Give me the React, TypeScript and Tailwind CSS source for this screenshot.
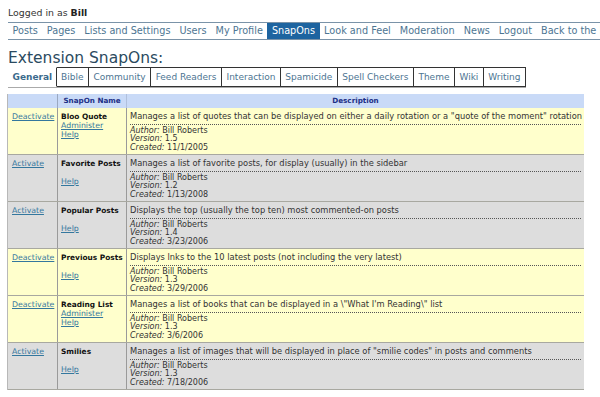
import React from "react";

type Row = {
  active: boolean;
  name: string;
  admin: boolean;
  desc: string;
  version: string;
  created: string;
};

const rows: Row[] = [
  {
    active: true,
    name: "Bloo Quote",
    admin: true,
    desc: 'Manages a list of quotes that can be displayed on either a daily rotation or a "quote of the moment" rotation',
    version: "1.5",
    created: "11/1/2005",
  },
  {
    active: false,
    name: "Favorite Posts",
    admin: false,
    desc: "Manages a list of favorite posts, for display (usually) in the sidebar",
    version: "1.2",
    created: "1/13/2008",
  },
  {
    active: false,
    name: "Popular Posts",
    admin: false,
    desc: "Displays the top (usually the top ten) most commented-on posts",
    version: "1.4",
    created: "3/23/2006",
  },
  {
    active: true,
    name: "Previous Posts",
    admin: false,
    desc: "Displays lnks to the 10 latest posts (not including the very latest)",
    version: "1.3",
    created: "3/29/2006",
  },
  {
    active: true,
    name: "Reading List",
    admin: true,
    desc: 'Manages a list of books that can be displayed in a \\"What I\'m Reading\\" list',
    version: "1.3",
    created: "3/6/2006",
  },
  {
    active: false,
    name: "Smilies",
    admin: false,
    desc: 'Manages a list of images that will be displayed in place of "smilie codes" in posts and comments',
    version: "1.3",
    created: "7/18/2006",
  },
];

const navItems = [
  "Posts",
  "Pages",
  "Lists and Settings",
  "Users",
  "My Profile",
  "SnapOns",
  "Look and Feel",
  "Moderation",
  "News",
  "Logout",
  "Back to the Blog",
];

const tabs = [
  "General",
  "Bible",
  "Community",
  "Feed Readers",
  "Interaction",
  "Spamicide",
  "Spell Checkers",
  "Theme",
  "Wiki",
  "Writing",
];

function SnapRow({ r }: { r: Row }) {
  const bg = r.active ? "bg-[#ffffcc]" : "bg-[#dddddd]";
  return (
    <div
      className={`grid h-[47px] grid-cols-[49px_69px_458px] border-b border-[#a8a8a0] ${bg}`}
    >
      <div className="pl-[4px] pt-[4px] text-[7.8px] leading-[9px]">
        <a className="text-[#34779e] underline">
          {r.active ? "Deactivate" : "Activate"}
        </a>
      </div>
      <div className="border-l border-[#9a9a9a] pl-[3px] pt-[4px] leading-[9px]">
        <div className="text-[7.4px] font-bold text-[#111]">{r.name}</div>
        <div className="text-[7.8px]">
          {r.admin ? (
            <a className="text-[#34779e] underline">Administer</a>
          ) : (
            "\u00a0"
          )}
        </div>
        <div className="text-[7.8px]">
          <a className="text-[#34779e] underline">Help</a>
        </div>
      </div>
      <div className="border-l border-[#9a9a9a] px-[3px] pt-[4px]">
        <div className="whitespace-nowrap border-b border-dotted border-[#555] pb-[3px] text-[8.3px] leading-[9px] text-[#333]">
          {r.desc}
        </div>
        <div className="pt-[1.5px] text-[8px] leading-[8.7px] text-[#333]">
          <div>
            <i>Author:</i> Bill Roberts
          </div>
          <div>
            <i>Version:</i> {r.version}
          </div>
          <div>
            <i>Created:</i> {r.created}
          </div>
        </div>
      </div>
    </div>
  );
}

export default function App() {
  return (
    <div className="h-[397px] w-[600px] overflow-hidden bg-white font-['DejaVu_Sans',sans-serif] text-[#333]">
      <div className="pl-[8px] pt-[6px] text-[9.4px] leading-[13px] text-[#333]">
        Logged in as <b className="text-[#222]">Bill</b>
      </div>
      <div className="ml-[8px] mt-[3px] flex w-max whitespace-nowrap border-y border-[#7a93a8] text-[9.7px] leading-[16px]">
        {navItems.map((n) => (
          <span
            key={n}
            className={
              n === "SnapOns"
                ? "bg-[#1d64a0] px-[4.5px] text-white"
                : "px-[4.5px] text-[#4d7592]"
            }
          >
            {n}
          </span>
        ))}
      </div>
      <div className="ml-[8px] mt-[9px] text-[15.5px] leading-[18px] text-[#2b4a60]">
        Extension SnapOns:
      </div>
      <div className="ml-[8px] mt-[0px] flex w-max text-[9px] leading-[18px] shadow-[0_1px_0_#aaaaaa]">
        {tabs.map((t) =>
          t === "General" ? (
            <span
              key={t}
              className="border border-transparent border-r-[#333] px-[3.5px] font-bold text-[#3b6a8c]"
            >
              {t}
            </span>
          ) : (
            <span
              key={t}
              className="border-y border-r border-[#333] px-[4.5px] text-[#4d7592]"
            >
              {t}
            </span>
          )
        )}
      </div>
      <div className="ml-[7px] mt-[7px] w-[577px] border-l border-[#b8b8b8]">
        <div className="grid h-[14px] grid-cols-[49px_69px_458px] bg-[#c9daf7] text-[7.2px] font-bold leading-[14px] text-[#1c2f86]">
          <div></div>
          <div className="border-l border-[#9aa8c0] text-center">SnapOn Name</div>
          <div className="border-l border-[#b0c0dc] text-center">Description</div>
        </div>
        {rows.map((r) => (
          <SnapRow key={r.name} r={r} />
        ))}
      </div>
    </div>
  );
}
